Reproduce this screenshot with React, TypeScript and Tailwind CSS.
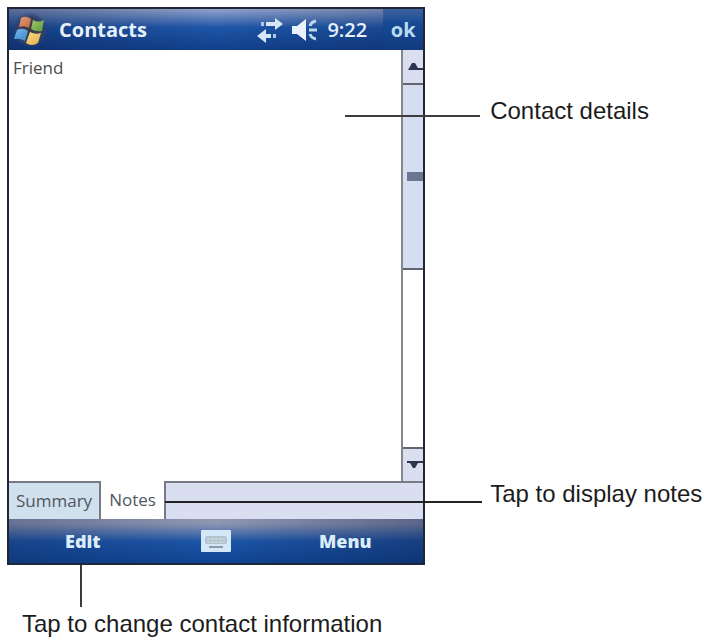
import { useState } from "react";

const tabs = ["Summary", "Notes"];

function StartFlag() {
  return (
    <svg viewBox="0 0 38 38" className="size-[38px]" aria-hidden="true">
      <defs>
        <radialGradient id="orb">
          <stop offset="0" stopColor="#3d3a3c" />
          <stop offset="0.7" stopColor="#343f60" />
          <stop offset="1" stopColor="#2b4474" stopOpacity="0" />
        </radialGradient>
        <linearGradient id="red" x2="1" y2="1">
          <stop offset="0" stopColor="#dfa184" />
          <stop offset="1" stopColor="#cc6334" />
        </linearGradient>
        <linearGradient id="green" x2="1" y2="1">
          <stop offset="0" stopColor="#a3c76c" />
          <stop offset="1" stopColor="#5c9a3f" />
        </linearGradient>
        <linearGradient id="blue" x2="1" y2="1">
          <stop offset="0" stopColor="#7ab8e6" />
          <stop offset="1" stopColor="#3a86cf" />
        </linearGradient>
        <linearGradient id="yellow" x2="1" y2="1">
          <stop offset="0" stopColor="#f8e08c" />
          <stop offset="1" stopColor="#e6a848" />
        </linearGradient>
      </defs>
      <circle cx="19" cy="19" r="18" fill="url(#orb)" />
      <path d="M10 7Q15 4 20 8L18 17Q13 14 8 16Z" fill="url(#red)" />
      <path d="M22 9Q27 12 33 9L31 20Q25 21 20 18Z" fill="url(#green)" />
      <path d="M6 19Q12 16 17 20L14 30Q9 27 3 28Z" fill="url(#blue)" />
      <path d="M19 21Q24 24 30 22L27 32Q21 36 15 32Z" fill="url(#yellow)" />
    </svg>
  );
}

function ConnectivityIcon() {
  return (
    <svg viewBox="0 0 26 26" className="size-[26px]" fill="#d5e6f5" aria-hidden="true">
      <path d="M9 5h9V1l8 6-8 6V9H9Z" />
      <path d="M4 5h3v4H4Z" opacity="0.8" />
      <path d="M14 17H9v-5l-9 7 9 7v-5h5Z" />
      <path d="M16 17h3v4h-3Z" opacity="0.8" />
    </svg>
  );
}

function SpeakerIcon() {
  return (
    <svg viewBox="0 0 28 24" className="h-6 w-7" aria-hidden="true">
      <path d="M1 8h5l9-7v22l-9-7H1Z" fill="#e9f2fb" />
      <path
        d="M19 8q1-4 6-5M18 12h8M19 16q1 4 6 5"
        fill="none"
        stroke="#bcd7ea"
        strokeWidth="3"
      />
    </svg>
  );
}

function KeyboardIcon() {
  return (
    <svg viewBox="0 0 30 22" className="h-[22px] w-[30px]" aria-hidden="true">
      <rect width="30" height="22" rx="1" fill="#d3e8f8" />
      <rect x="4" y="6" width="22" height="8" rx="2" fill="#b3c3cd" />
      <path d="M6 9h18M6 12h18" stroke="#d6e2ea" strokeWidth="1" strokeDasharray="3 1" />
      <path d="M8 17h14" stroke="#8c9ba8" strokeWidth="2" />
    </svg>
  );
}

function ScrollBar() {
  return (
    <div className="flex w-[22px] shrink-0 flex-col border-l-2 border-[#85868e] bg-white">
      <button
        type="button"
        aria-label="Scroll up"
        className="flex h-[35px] items-center justify-end border-b-2 border-[#62656f] bg-[#dadfef]"
      >
        <svg viewBox="0 0 16 8" className="h-2 w-4" fill="#2f3450" aria-hidden="true">
          <path d="M5 0h3l3 5h5v2H1Z" />
        </svg>
      </button>
      <div className="flex h-[185px] items-center justify-end border-b-2 border-[#62656f] bg-[#d5def0]">
        <div className="h-[9px] w-4 bg-[#6b7690]" />
      </div>
      <div className="flex-1" />
      <button
        type="button"
        aria-label="Scroll down"
        className="flex h-[34px] items-center justify-end border-t-2 border-[#62656f] bg-[#dadfef]"
      >
        <svg viewBox="0 0 16 8" className="h-2 w-4" fill="#2f3450" aria-hidden="true">
          <path d="M0 0h16v2h-5l-3 5H6L3 2H0Z" />
        </svg>
      </button>
    </div>
  );
}

function PhoneScreen() {
  const [activeTab, setActiveTab] = useState("Notes");

  return (
    <section className="border-2 border-[#20263a] font-['Open_Sans','Noto_Sans',sans-serif]">
      <header className="relative flex h-[41px] items-center bg-linear-to-b from-[#93a3ca] via-[#1d56a8] via-45% to-[#123f8a] text-xl font-bold text-[#e6effa]">
        <div className="absolute inset-0 bg-linear-to-r from-[#0b1c48]/40 via-transparent via-50% to-[#0b1c48]/30" />
        <div className="relative flex w-full items-center">
          <button type="button" aria-label="Start" className="ml-0.5">
            <StartFlag />
          </button>
          <h1 className="ml-2.5">Contacts</h1>
          <div className="ml-auto flex items-center">
            <ConnectivityIcon />
            <span className="ml-2">
              <SpeakerIcon />
            </span>
            <span className="ml-2 text-xl font-semibold">9:22</span>
            <button
              type="button"
              className="ml-4 h-[41px] w-10 bg-linear-to-b from-[#3c62a0] via-[#164a94] via-35% to-[#123a80] text-xl font-bold text-[#b9daef]"
            >
              ok
            </button>
          </div>
        </div>
      </header>

      <div className="flex min-h-[431px] bg-white">
        <p className="flex-1 px-1 pt-1 text-[17px] leading-7 text-[#4b4b4b]">Friend</p>
        <ScrollBar />
      </div>

      <nav className="flex h-[38px] bg-[#d9dff1] text-[17px] text-[#50565c]">
        {tabs.map((tab) => (
          <button
            key={tab}
            type="button"
            onClick={() => setActiveTab(tab)}
            className={
              tab === activeTab
                ? "border-r-2 border-[#777a84] bg-white px-2"
                : "border-t-2 border-r-2 border-[#777a84] bg-[#d0e0ed] px-[7px]"
            }
          >
            {tab}
          </button>
        ))}
        <div className="flex-1 border-t-2 border-[#777a84]" />
      </nav>

      <footer className="relative h-11 bg-linear-to-b from-[#8f97b2] from-10% via-[#1d56a8] via-50% to-[#0f4593] text-lg font-extrabold text-[#dcecf9]">
        <div className="absolute inset-0 bg-linear-to-r from-[#0b1c48]/30 via-transparent via-50% to-[#0b1c48]/40" />
        <div className="relative grid h-full grid-cols-[36fr_27fr_38fr] items-center">
          <button type="button">Edit</button>
          <button type="button" aria-label="Keyboard" className="flex justify-center pl-2">
            <KeyboardIcon />
          </button>
          <button type="button">Menu</button>
        </div>
      </footer>
    </section>
  );
}

export default function App() {
  return (
    <main className="min-h-screen bg-white pt-[7px] pl-[7px] font-['Liberation_Sans',Arial,sans-serif] text-2xl leading-7 text-[#1c1c1c]">
      <div className="grid grid-cols-[3fr_2fr]">
        <PhoneScreen />
        <div className="flex flex-col justify-between pt-[90px] pb-[57px] whitespace-nowrap">
          <p className="relative pl-[65px]">
            <span className="absolute top-[18px] -left-20 h-[2px] w-[135px] bg-[#3c3c3c]" />
            Contact details
          </p>
          <p className="relative pl-[65px]">
            <span className="absolute top-[21px] -left-[260px] h-[2px] w-[317px] bg-[#222222]" />
            Tap to display notes
          </p>
        </div>
      </div>
      <div className="ml-[73px] h-[42px] w-[2px] bg-[#3c3c3c]" />
      <p className="pt-[3px] pl-[15px]">Tap to change contact information</p>
    </main>
  );
}
